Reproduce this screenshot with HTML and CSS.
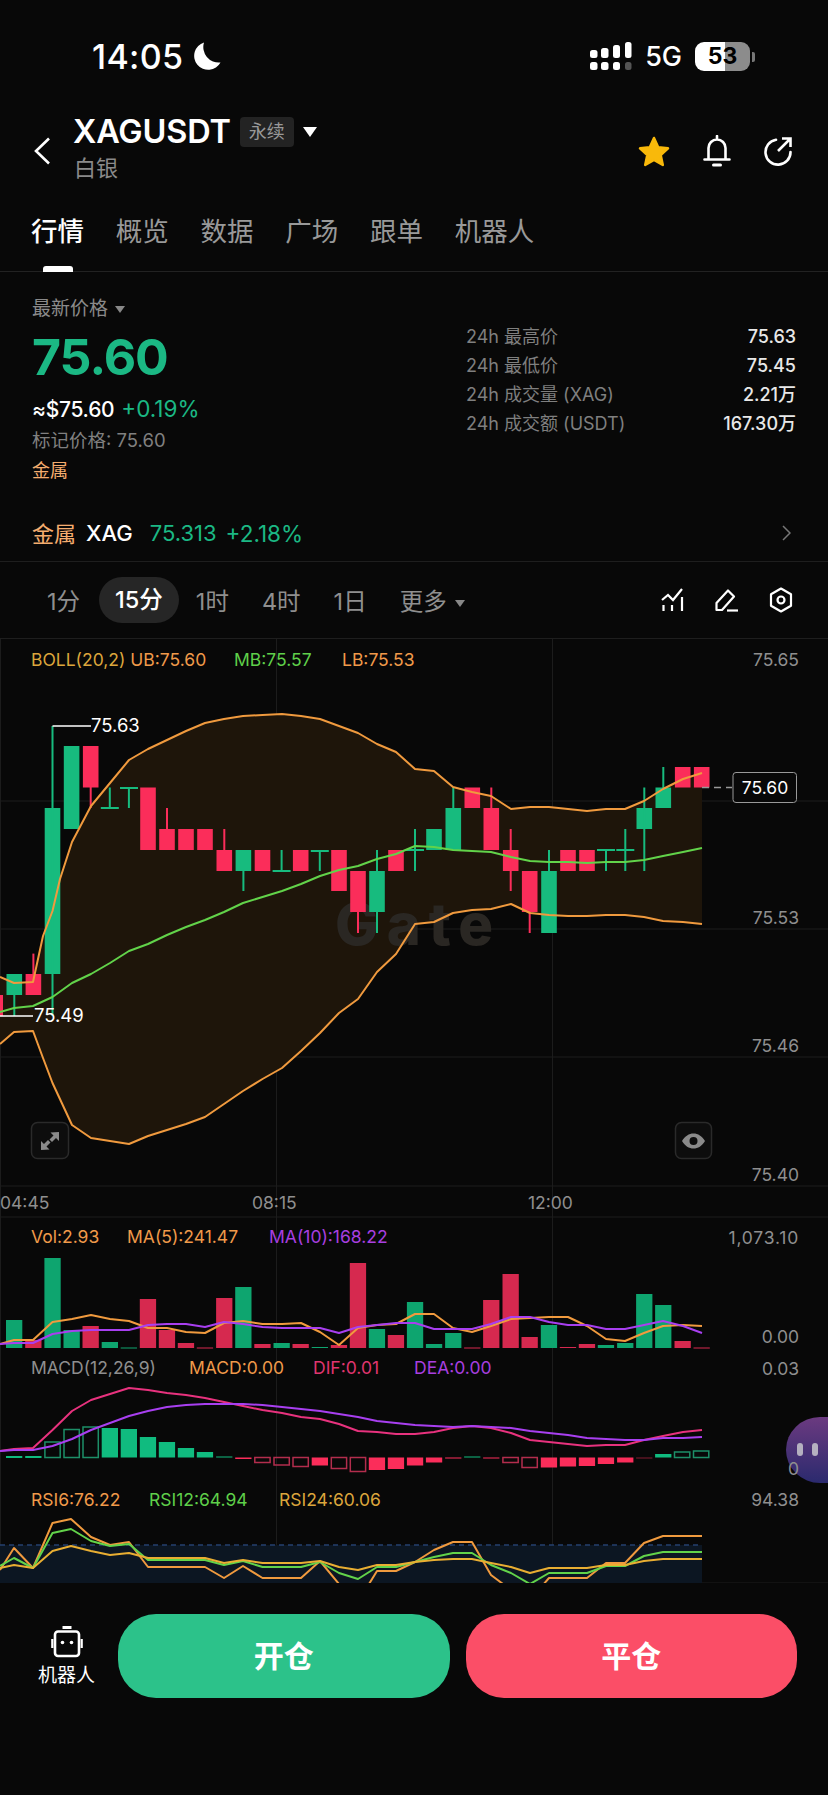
FILE: index.html
```html
<!DOCTYPE html>
<html lang="zh">
<head>
    <meta charset="UTF-8">
    <meta name="viewport" content="width=device-width, initial-scale=1.0">
    <title>XAGUSDT</title>
    <link rel="stylesheet" href="styles.css">
</head>
<body>
    <div class="status">
        <div class="status-left">
            <span class="clock">14:05</span>
            <svg class="moon" width="28" height="28" viewBox="0 0 28 28"><path d="M11 .5A14 14 0 1 0 27.5 20.500 15.500 15.500 0 0 1 11 .5z" fill="#fff"/></svg>
        </div>
        <div class="status-right">
            <svg width="42" height="28" viewBox="0 0 42 28" fill="#fff">
                <rect x="0" y="8" width="7.5" height="8" rx="2.5"/><rect x="11" y="6" width="7.5" height="10" rx="2.5"/><rect x="23" y="3" width="7" height="13" rx="2.5"/><rect x="35" y="0" width="6.5" height="16" rx="2.5"/>
                <rect x="0" y="20" width="7.5" height="8" rx="2.5"/><rect x="11" y="20" width="7.5" height="8" rx="2.5"/><rect x="23" y="20" width="7" height="8" rx="2.5"/><rect x="35" y="20" width="6.5" height="8" rx="2.5" fill="#555"/>
            </svg>
            <span class="network">5G</span>
            <div class="battery">53</div>
        </div>
    </div>

    <div class="nav">
        <svg class="back" width="16" height="28" viewBox="0 0 16 28"><path d="M15 1.5 2 14l13 12.5" fill="none" stroke="#fff" stroke-width="2.6"/></svg>
        <div class="title">
            <div class="title-top">
                <span class="symbol">XAGUSDT</span>
                <span class="tag">永续</span>
                <span class="caret"></span>
            </div>
            <div class="subtitle">白银</div>
        </div>
        <div class="nav-icons">
            <svg width="32" height="31" viewBox="0 0 32 31"><path d="M16 2l4.2 9.3 9.8 1-7.3 6.7 2.1 10L16 24l-8.800 5 2.100-10L2 12.300l9.800-1z" fill="#f9b90a" stroke="#f9b90a" stroke-width="2.500" stroke-linejoin="round"/></svg>
            <svg width="28" height="32" viewBox="0 0 28 32" fill="none" stroke="#fff" stroke-width="2.600"><path d="M14 1v3M5.500 24V13a8.500 8.500 0 0 1 17 0v11M1.500 24.500h25" stroke-linecap="round"/><path d="M10.500 30h7" stroke-width="3" stroke-linecap="round"/></svg>
            <svg width="28" height="30" viewBox="0 0 28 30" fill="none" stroke="#fff" stroke-width="2.600"><path d="M12 3.800A12.500 12.500 0 1 0 26.500 16" stroke-linecap="round"/><path d="M14 15 26 3M18 2.500h8.500V11"/></svg>
        </div>
    </div>

    <div class="tabs">
        <span class="tab active">行情</span>
        <span class="tab">概览</span>
        <span class="tab">数据</span>
        <span class="tab">广场</span>
        <span class="tab">跟单</span>
        <span class="tab">机器人</span>
    </div>

    <div class="quote">
        <div class="quote-left">
            <div class="price-label">最新价格 <span class="caret small"></span></div>
            <div class="price">75.60</div>
            <div class="price-sub"><span class="fiat">≈$75.60</span><span class="up">+0.19%</span></div>
            <div class="mark">标记价格: 75.60</div>
            <div class="sector">金属</div>
        </div>
        <div class="quote-right">
            <div class="stat"><span>24h 最高价</span><b>75.63</b></div>
            <div class="stat"><span>24h 最低价</span><b>75.45</b></div>
            <div class="stat"><span>24h 成交量 (XAG)</span><b>2.21万</b></div>
            <div class="stat"><span>24h 成交额 (USDT)</span><b>167.30万</b></div>
        </div>
    </div>

    <div class="index-row">
        <span class="index-sector">金属</span>
        <span class="index-name">XAG</span>
        <span class="index-price up">75.313</span>
        <span class="index-change up">+2.18%</span>
        <svg class="index-arrow" width="9" height="16" viewBox="0 0 9 16"><path d="M1 1l7 7-7 7" fill="none" stroke="#777" stroke-width="1.500"/></svg>
    </div>

    <div class="periods">
        <span class="period">1分</span>
        <span class="period active">15分</span>
        <span class="period">1时</span>
        <span class="period">4时</span>
        <span class="period">1日</span>
        <span class="period more">更多 <span class="caret small"></span></span>
        <div class="tools">
            <svg width="24" height="24" viewBox="0 0 24 24" fill="none" stroke="#fff" stroke-width="2.200"><path d="M1 12l6-5 5 5 9-11"/><path d="M2.500 17v6M11 17v6M21 9v14"/></svg>
            <svg width="24" height="24" viewBox="0 0 24 24" fill="none" stroke="#fff" stroke-width="2.200"><path d="M1.500 22V15L13 2.500l6 6L7 22z" stroke-linejoin="round"/><path d="M12 22.500h11"/></svg>
            <svg width="24" height="26" viewBox="0 0 24 26" fill="none" stroke="#fff" stroke-width="2.200"><path d="M12 1.500l10 5.800v11.400l-10 5.800-10-5.800V7.300z" stroke-linejoin="round"/><circle cx="12" cy="13" r="3.500"/></svg>
        </div>
    </div>

    <svg class="chart" width="828" height="944" viewBox="0 639 828 944">
        <defs>
            <clipPath id="rsiClip"><rect x="0" y="1500" width="828" height="83"/></clipPath>
            <linearGradient id="bubble" x1="0" y1="0" x2="0" y2="1"><stop offset="0" stop-color="#6b3a80"/><stop offset="1" stop-color="#2b2a6e"/></linearGradient>
        </defs>

        <g class="grid">
            <path d="M.5 639V1583M276.500 639V1583M552.500 639V1583"/>
            <path d="M0 801H828M0 929H828M0 1057H828M0 1186H828M0 1217H828M0 1583H828"/>
        </g>

        <polygon class="band" points="0,977 14,983 33,982 43,936 52.500,911 60,879 72,842 91,806 110,783 129,760 148,749 167,740 186,731 205,723 224,719 243,716 262.500,715 282,714 301,716 320,719 339,726 358,733 377,744 396,752 415,769 434,771 453,787 472,792 491,796 511,809 530,807 549,807 568,809 587,811 606,809 625,809 644,801 663,789 683,779 702,773 702,924 683,922 663,921 644,917 625,915 606,915 587,916 568,916 549,915 530,913 511,904 491,909 472,910 453,913 434,922 415,924 396,954 377,972 358,999 339,1013 320,1033 301,1051 282,1068 262.500,1079 243,1091 224,1104 205,1117 186,1124 167,1130 148,1136 129,1144 110,1141 91,1138 72,1125 52.500,1083 43,1058 33,1031 14,1032 0,1044"/>
        <text class="watermark" x="335" y="945">Gate</text>

        <g class="candle-up">
            <rect x="6.500" y="974" width="15.600" height="21"/><rect x="13.300" y="995" width="2" height="21"/>
            <rect x="44.700" y="808" width="15.600" height="166"/><rect x="51.500" y="726" width="2" height="290"/>
            <rect x="63.800" y="746" width="15.600" height="83"/>
            <rect x="100.800" y="807" width="18" height="2"/><rect x="108.800" y="787.500" width="2" height="20"/>
            <rect x="120" y="787" width="18" height="2"/><rect x="127.900" y="787" width="2" height="21"/>
            <rect x="235.600" y="850" width="15.600" height="21"/><rect x="242.400" y="871" width="2" height="20"/>
            <rect x="272.600" y="870" width="18" height="2"/><rect x="280.600" y="850" width="2" height="20"/>
            <rect x="310.800" y="850" width="18" height="2"/><rect x="318.800" y="850" width="2" height="21"/>
            <rect x="369.200" y="871" width="15.600" height="41"/><rect x="376" y="850" width="2" height="83"/>
            <rect x="406" y="849" width="18" height="2"/><rect x="414" y="829" width="2" height="42"/>
            <rect x="426.200" y="829" width="15.600" height="21"/>
            <rect x="445.500" y="808" width="15.600" height="42"/><rect x="452.300" y="787.500" width="2" height="21"/>
            <rect x="541.200" y="871" width="15.600" height="62"/><rect x="548" y="850" width="2" height="21"/>
            <rect x="597" y="849" width="18" height="2"/><rect x="605" y="849" width="2" height="22"/>
            <rect x="616.300" y="849" width="18" height="2"/><rect x="624.300" y="829" width="2" height="42"/>
            <rect x="636.500" y="808" width="15.600" height="21"/><rect x="643.300" y="787.500" width="2" height="83.500"/>
            <rect x="655.500" y="787.500" width="15.600" height="20.500"/><rect x="662.300" y="767" width="2" height="21"/>
        </g>
        <g class="candle-down">
            <rect x="-5" y="995" width="8" height="21"/>
            <rect x="25.600" y="974" width="15.600" height="21"/><rect x="32.400" y="953.600" width="2" height="21"/>
            <rect x="82.900" y="746" width="15.600" height="41.500"/><rect x="89.700" y="787" width="2" height="21"/>
            <rect x="140.200" y="787.500" width="15.600" height="62.500"/>
            <rect x="159.200" y="829" width="15.600" height="21"/><rect x="166" y="808" width="2" height="21"/>
            <rect x="178.200" y="829" width="15.600" height="21"/>
            <rect x="197.200" y="829" width="15.600" height="21"/>
            <rect x="216.500" y="850" width="15.600" height="21"/><rect x="223.300" y="829" width="2" height="21"/>
            <rect x="254.700" y="850" width="15.600" height="21"/>
            <rect x="292.900" y="850" width="15.600" height="21"/>
            <rect x="331.200" y="850" width="15.600" height="41"/>
            <rect x="350.200" y="871" width="15.600" height="41"/><rect x="357" y="912" width="2" height="21"/>
            <rect x="388.200" y="850" width="15.600" height="21"/>
            <rect x="464.500" y="787.500" width="15.600" height="20.500"/>
            <rect x="483.500" y="808" width="15.600" height="42"/><rect x="490.300" y="787.500" width="2" height="21"/>
            <rect x="502.900" y="850" width="15.600" height="21"/><rect x="509.700" y="829" width="2" height="62"/>
            <rect x="521.900" y="871" width="15.600" height="41"/><rect x="528.700" y="912" width="2" height="21"/>
            <rect x="560.200" y="850" width="15.600" height="21"/>
            <rect x="579.200" y="850" width="15.600" height="21"/>
            <rect x="674.900" y="767" width="15.600" height="20.500"/>
            <rect x="693.900" y="767" width="15.600" height="20.500"/>
        </g>

        <g class="line">
            <polyline class="orange" points="0,977 14,983 33,982 43,936 52.500,911 60,879 72,842 91,806 110,783 129,760 148,749 167,740 186,731 205,723 224,719 243,716 262.500,715 282,714 301,716 320,719 339,726 358,733 377,744 396,752 415,769 434,771 453,787 472,792 491,796 511,809 530,807 549,807 568,809 587,811 606,809 625,809 644,801 663,789 683,779 702,773"/>
            <polyline class="green" points="0,1012 14,1008 33,1006 52.500,997 72,983 91,974 110,963 129,951 148,944 167,935 186,927 205,920 224,912 243,903 262.500,897 282,891 301,884 320,876 339,870 358,866 377,859 396,854 415,846 434,847 453,850 472,851 491,852 511,857 530,861 549,862 568,862 587,863 606,862 625,862 644,860 663,856 683,852 702,848"/>
            <polyline class="orange" points="0,1044 14,1032 33,1031 43,1058 52.500,1083 72,1125 91,1138 110,1141 129,1144 148,1136 167,1130 186,1124 205,1117 224,1104 243,1091 262.500,1079 282,1068 301,1051 320,1033 339,1013 358,999 377,972 396,954 415,924 434,922 453,913 472,910 491,909 511,904 530,913 549,915 568,916 587,916 606,915 625,915 644,917 663,921 683,922 702,924"/>
        </g>

        <path class="callout" d="M52.500 726H91M0 1016H33"/>
        <text class="lbl white big" x="91" y="732">75.63</text>
        <text class="lbl white big" x="34" y="1022">75.49</text>

        <g class="lbl">
            <text class="yellow" x="31" y="666">BOLL(20,2) <tspan class="orange-text">UB:75.60</tspan></text>
            <text class="green-text" x="234" y="666">MB:75.57</text>
            <text class="orange-text" x="342" y="666">LB:75.53</text>
        </g>
        <g class="lbl axis">
            <text x="799" y="666">75.65</text>
            <text x="799" y="924">75.53</text>
            <text x="799" y="1052">75.46</text>
            <text x="799" y="1181">75.40</text>
            <text class="wide" x="799" y="1244">1,073.10</text>
            <text x="799" y="1343">0.00</text>
            <text x="799" y="1375">0.03</text>
            <text x="799" y="1506">94.38</text>
        </g>

        <path class="dash" d="M702 787.500H732"/>
        <rect class="tag-box" x="733" y="772.500" width="63.500" height="30" rx="3"/>
        <text class="lbl white" x="765" y="794" text-anchor="middle">75.60</text>

        <g class="chart-btn">
            <rect x="31.500" y="1122.500" width="37" height="36" rx="6"/>
            <rect x="675.500" y="1122.500" width="36" height="36" rx="6"/>
        </g>
        <path class="btn-icon" d="M59 1132v9l-3-3-4 4-2.500-2.500 4-4-3-3zM41 1150v-9l3 3 4-4 2.500 2.500-4 4 3 3z"/>
        <path class="btn-icon" fill-rule="evenodd" d="M682 1141c3-5 7-7.500 11.500-7.500s8.500 2.500 11.500 7.500c-3 5-7 7.500-11.500 7.500s-8.500-2.500-11.500-7.500zm11.500-4a4 4 0 1 0 0 8 4 4 0 0 0 0-8z"/>

        <g class="lbl time">
            <text x="0" y="1209">04:45</text>
            <text x="252" y="1209">08:15</text>
            <text x="528" y="1209">12:00</text>
        </g>

        <g class="lbl">
            <text class="orange-text" x="31" y="1243">Vol:2.93</text>
            <text class="orange-text" x="127" y="1243">MA(5):241.47</text>
            <text class="purple-text" x="269" y="1243">MA(10):168.22</text>
        </g>
        <g class="vol-up">
            <rect x="6" y="1320" width="16.300" height="28"/><rect x="44.400" y="1258" width="16.300" height="90"/><rect x="63.500" y="1330" width="16.300" height="18"/><rect x="101.700" y="1342" width="16.300" height="6"/><rect x="120.700" y="1347.500" width="16.300" height="1"/>
            <rect x="235.200" y="1287" width="16.300" height="61"/><rect x="273.500" y="1343" width="16.300" height="5"/><rect x="311.700" y="1347" width="16.300" height="1"/><rect x="368.800" y="1329" width="16.300" height="19"/><rect x="406.900" y="1302" width="16.300" height="46"/>
            <rect x="425.900" y="1344" width="16.300" height="4"/><rect x="445.100" y="1333" width="16.300" height="15"/><rect x="540.800" y="1325" width="16.300" height="23"/><rect x="597.800" y="1345" width="16.300" height="3"/><rect x="617.100" y="1343" width="16.300" height="5"/>
            <rect x="636.100" y="1294" width="16.300" height="54"/><rect x="655.100" y="1305" width="16.300" height="43"/>
        </g>
        <g class="vol-down">
            <rect x="25.200" y="1340" width="16.300" height="8"/><rect x="82.500" y="1326" width="16.300" height="22"/><rect x="139.800" y="1299" width="16.300" height="49"/><rect x="158.800" y="1330" width="16.300" height="18"/><rect x="177.800" y="1343" width="16.300" height="5"/>
            <rect x="196.800" y="1347.500" width="16.300" height="1"/><rect x="216.100" y="1298" width="16.300" height="50"/><rect x="254.300" y="1344" width="16.300" height="4"/><rect x="292.500" y="1344" width="16.300" height="4"/><rect x="330.800" y="1345" width="16.300" height="3"/>
            <rect x="349.800" y="1263" width="16.300" height="85"/><rect x="387.800" y="1335" width="16.300" height="13"/><rect x="464.100" y="1347.500" width="16.300" height="1"/><rect x="483.100" y="1300" width="16.300" height="48"/><rect x="502.500" y="1274" width="16.300" height="74"/>
            <rect x="521.500" y="1337" width="16.300" height="11"/><rect x="559.800" y="1347" width="16.300" height="1"/><rect x="578.800" y="1344" width="16.300" height="4"/><rect x="674.500" y="1341" width="16.300" height="7"/><rect x="693.500" y="1347.500" width="16.300" height="1"/>
        </g>
        <g class="line">
            <polyline class="orange" points="0,1344 14,1340 33,1340 52.500,1322 72,1319 91,1315 110,1319 129,1321 148,1328 167,1328 186,1332 205,1333 224,1323 243,1321 262.500,1324 282,1324 301,1323 320,1332 339,1345 358,1328 377,1325 396,1324 415,1314 434,1314 453,1328 472,1332 491,1326 511,1319 530,1318 549,1317 568,1317 587,1326 606,1339 625,1341 644,1333 663,1326 683,1325 702,1326"/>
            <polyline class="purple" points="0,1344 14,1343 33,1343 52.500,1334 72,1331 91,1330 110,1330 129,1330 148,1325 167,1324 186,1324 205,1327 224,1322 243,1324 262.500,1327 282,1328 301,1328 320,1328 339,1333 358,1327 377,1325 396,1323 415,1323 434,1329 453,1329 472,1329 491,1324 511,1317 530,1317 549,1322 568,1325 587,1325 606,1329 625,1329 644,1325 663,1321 683,1326 702,1333"/>
        </g>

        <g class="lbl">
            <text class="macd-name" x="31" y="1374">MACD(12,26,9)</text>
            <text class="orange-text" x="189" y="1374">MACD:0.00</text>
            <text class="pink-text" x="313" y="1374">DIF:0.01</text>
            <text class="purple-text" x="414" y="1374">DEA:0.00</text>
        </g>
        <g class="macd-up">
            <rect x="6" y="1456" width="16.300" height="2"/><rect x="25.200" y="1456" width="16.300" height="2"/><rect x="101.700" y="1428" width="16.300" height="29.500"/><rect x="120.700" y="1429" width="16.300" height="28.500"/><rect x="139.800" y="1437" width="16.300" height="20.500"/><rect x="158.800" y="1442" width="16.300" height="15.500"/><rect x="177.800" y="1448" width="16.300" height="9.500"/><rect x="196.800" y="1452" width="16.300" height="5.500"/><rect x="216.100" y="1456.500" width="16.300" height="1"/><rect x="464.100" y="1456.500" width="16.300" height="1"/><rect x="655.100" y="1454" width="16.300" height="3.500"/>
        </g>
        <g class="macd-down">
            <rect x="235.200" y="1457.500" width="16.300" height="1.500"/><rect x="311.700" y="1457.500" width="16.300" height="8"/><rect x="368.800" y="1457.500" width="16.300" height="12.500"/><rect x="387.800" y="1457.500" width="16.300" height="11.500"/><rect x="406.900" y="1457.500" width="16.300" height="8"/><rect x="425.900" y="1457.500" width="16.300" height="5"/><rect x="445.100" y="1457.500" width="16.300" height="1"/><rect x="483.100" y="1457.500" width="16.300" height="1"/><rect x="540.800" y="1457.500" width="16.300" height="10"/><rect x="559.800" y="1457.500" width="16.300" height="9"/><rect x="578.800" y="1457.500" width="16.300" height="8.500"/><rect x="597.800" y="1457.500" width="16.300" height="6.500"/><rect x="617.100" y="1457.500" width="16.300" height="5"/><rect x="636.100" y="1457.500" width="16.300" height="1" opacity=".5"/>
        </g>
        <g class="macd-hollow-up">
            <rect x="44.900" y="1442" width="15.300" height="15.500"/><rect x="64" y="1429.500" width="15.300" height="28"/><rect x="83" y="1427" width="15.300" height="30.500"/><rect x="674.500" y="1452" width="15.300" height="5.500"/><rect x="693.500" y="1451" width="15.300" height="6.500"/>
        </g>
        <g class="macd-hollow-down">
            <rect x="254.800" y="1457.500" width="15.300" height="5"/><rect x="274" y="1457.500" width="15.300" height="7.500"/><rect x="293" y="1457.500" width="15.300" height="9"/><rect x="331.300" y="1457.500" width="15.300" height="11"/><rect x="350.300" y="1457.500" width="15.300" height="14"/><rect x="502.900" y="1457.500" width="15.300" height="5"/><rect x="522" y="1457.500" width="15.300" height="10"/>
        </g>
        <g class="line">
            <polyline class="pink" points="0,1451 14,1449 33,1448 52.500,1430 72,1411 91,1400 110,1394 129,1388 148,1390 167,1393 186,1395 205,1398 224,1402 243,1406 262.500,1410 282,1413 301,1417 320,1419 339,1424 358,1431 377,1432 396,1434 415,1434 434,1432 453,1428 472,1426 491,1428 511,1433 530,1440 549,1442 568,1444 587,1446 606,1445 625,1445 644,1440 663,1436 683,1432 702,1430"/>
            <polyline class="purple" points="0,1451 14,1450 33,1450 52.500,1446 72,1439 91,1430 110,1423 129,1416 148,1411 167,1407 186,1405 205,1404 224,1404 243,1404 262.500,1405 282,1407 301,1409 320,1411 339,1414 358,1417 377,1421 396,1423 415,1425 434,1426 453,1427 472,1426 491,1427 511,1428 530,1431 549,1433 568,1435 587,1438 606,1439 625,1440 644,1440 663,1438 683,1438 702,1437"/>
        </g>

        <g class="lbl">
            <text class="orange-text" x="31" y="1506">RSI6:76.22</text>
            <text class="green-text" x="149" y="1506">RSI12:64.94</text>
            <text class="yellow" x="279" y="1506">RSI24:60.06</text>
        </g>
        <rect class="rsi-zone" x="0" y="1545" width="702" height="38"/>
        <path class="rsi-dash" d="M0 1545H702"/>
        <g class="line" clip-path="url(#rsiClip)">
            <polyline class="orange" points="0,1570 14,1548 33,1568 52.500,1523 71,1519 91,1537 110,1545 129,1542 148,1567 167,1567 186,1567 205,1567 224,1578 243,1566 262.500,1578 282,1578 301,1578 320,1561 339,1584 358,1593 369,1584 377,1571 396,1571 415,1562 434,1550 453,1542 472,1542 491,1575 511,1590 530,1600 549,1578 568,1578 587,1578 606,1563 625,1563 644,1543 663,1536 683,1536 702,1536"/>
            <polyline class="green" points="0,1566 14,1558 33,1568 52.500,1533 71,1529 91,1541 110,1546 129,1544 148,1560 167,1560 186,1560 205,1560 224,1565 243,1561 262.500,1567 282,1567 301,1567 320,1562 339,1573 358,1579 377,1567 396,1567 415,1562 434,1557 453,1553 472,1553 491,1565 511,1573 530,1584 549,1573 568,1573 587,1573 606,1566 625,1566 644,1556 663,1552 683,1552 702,1552"/>
            <polyline class="gold" points="0,1568 14,1565 33,1568 52.500,1551 71,1546 91,1551 110,1555 129,1553 148,1558 167,1558 186,1558 205,1558 224,1563 243,1560 262.500,1563 282,1563 301,1563 320,1561 339,1567 358,1570 377,1565 396,1565 415,1562 434,1560 453,1559 472,1559 491,1563 511,1567 530,1573 549,1568 568,1568 587,1568 606,1565 625,1565 644,1561 663,1559 683,1559 702,1559"/>
        </g>

        <path class="float-btn" d="M828 1417h-8a34 33 0 0 0-34 33 34 33 0 0 0 34 33h8z"/>
        <rect class="float-dot" x="797" y="1443" width="6" height="13" rx="3"/>
        <rect class="float-dot" x="812" y="1443" width="6" height="13" rx="3"/>
        <text class="lbl axis" x="799" y="1475">0</text>
    </svg>

    <div class="actions">
        <div class="bot">
            <svg width="32" height="32" viewBox="0 0 32 32" fill="none" stroke="#fff" stroke-width="2.600">
                <rect x="4" y="5.500" width="24" height="24.500" rx="3"/>
                <path d="M11.500 1.500h9" stroke-width="3"/>
                <path d="M1.300 13v9M30.700 13v9" stroke-width="2.200"/>
                <circle cx="11.500" cy="16.500" r="1.800" fill="#fff" stroke="none"/>
                <circle cx="20.500" cy="16.500" r="1.800" fill="#fff" stroke="none"/>
            </svg>
            <span>机器人</span>
        </div>
        <div class="trade open">开仓</div>
        <div class="trade close">平仓</div>
    </div>
</body>
</html>
```

FILE: styles.css
```css
body {
    font-family: Inter, "Noto Sans CJK SC", sans-serif;
    background-color: #080808;
    color: #fff;
    margin: 0;
    width: 828px;
    height: 1795px;
    overflow: hidden;
}
.status {
    display: flex;
    justify-content: space-between;
    align-items: center;
    height: 30px;
    padding: 41px 75px 0 92px;
}
.status-left {
    display: flex;
    align-items: center;
    gap: 10px;
}
.clock {
    font-size: 34px;
    font-weight: 500;
    letter-spacing: .3px;
}
.status-right {
    display: flex;
    align-items: center;
    gap: 13px;
}
.network {
    font-size: 27px;
    font-weight: 500;
}
.battery {
    position: relative;
    width: 55px;
    height: 29px;
    margin-right: 3px;
    border-radius: 9px;
    background: linear-gradient(to right, #fff 55%, #8c8c8c 55%);
    color: #000;
    font-size: 23px;
    font-weight: 700;
    line-height: 29px;
    text-align: center;
}
.battery::after {
    content: "";
    position: absolute;
    right: -5px;
    top: 10px;
    width: 3px;
    height: 10px;
    border-radius: 0 2px 2px 0;
    background: #777;
}
.nav {
    display: flex;
    align-items: center;
    height: 62px;
    margin-top: 45px;
    padding: 0 36px 0 34px;
}
.back {
    margin: 8px 24px 0 0;
}
.title {
    flex: 1;
    padding-top: 2px;
}
.title-top {
    display: flex;
    align-items: center;
}
.symbol {
    margin-left: -1px;
    font-size: 32.500px;
    font-weight: 600;
    line-height: 30px;
    letter-spacing: -.2px;
}
.tag {
    margin-left: 9px;
    padding: 0 9px;
    background: #232323;
    border-radius: 4px;
    color: #999;
    font-size: 18px;
    line-height: 30px;
}
.caret {
    display: inline-block;
    width: 0;
    height: 0;
    margin-left: 9px;
    border-left: 7px solid transparent;
    border-right: 7px solid transparent;
    border-top: 10px solid #fff;
}
.caret.small {
    margin-left: 2px;
    border-left-width: 5.500px;
    border-right-width: 5.500px;
    border-top: 7px solid #888;
    vertical-align: middle;
}
.subtitle {
    margin-top: 9px;
    color: #8a8a8a;
    font-size: 22px;
    line-height: 24px;
}
.nav-icons {
    display: flex;
    align-items: center;
    gap: 33px;
    margin-top: 8px;
}
.tabs {
    display: flex;
    gap: 31.750px;
    height: 53px;
    margin-top: 40px;
    padding-left: 31px;
    border-bottom: 1px solid #222;
}
.tab {
    position: relative;
    color: #999;
    font-size: 26.500px;
    line-height: 26px;
}
.tab.active {
    color: #fff;
    font-weight: 500;
}
.tab.active::after {
    content: "";
    position: absolute;
    left: 12px;
    top: 48px;
    width: 30px;
    height: 6px;
    border-radius: 3px 3px 0 0;
    background: #fff;
}
.quote {
    display: flex;
    justify-content: space-between;
    height: 233px;
    padding: 0 32px;
}
.price-label {
    margin-top: 26px;
    color: #8a8a8a;
    font-size: 19px;
    line-height: 22px;
}
.price {
    margin-top: 13px;
    color: #1bb884;
    font-size: 50px;
    font-weight: 700;
    line-height: 48px;
    letter-spacing: -1px;
}
.price-sub {
    display: flex;
    align-items: baseline;
    margin-top: 15px;
    line-height: 26px;
}
.fiat {
    margin-right: 7px;
    font-size: 21px;
    font-weight: 500;
    letter-spacing: -.3px;
}
.price-sub .up {
    font-size: 22.500px;
}
.up {
    color: #1bb884;
}
.mark {
    margin-top: 5px;
    color: #808080;
    font-size: 18.500px;
    line-height: 24px;
}
.sector {
    margin-top: 7px;
    color: #f5ad6f;
    font-size: 18px;
    line-height: 24px;
}
.quote-right {
    width: 330px;
    margin-top: 50px;
}
.stat {
    display: flex;
    justify-content: space-between;
    height: 29px;
    color: #7f7f7f;
    font-size: 18px;
    line-height: 29px;
}
.stat b {
    color: #e8e8e8;
    font-weight: 500;
}
.index-row {
    display: flex;
    align-items: center;
    height: 56px;
    padding: 0 37px 0 32px;
    border-bottom: 1px solid #1e1e1e;
    font-size: 22px;
}
.index-sector {
    margin-bottom: 3px;
    color: #f5ad6f;
}
.index-name {
    margin-left: 10px;
    font-weight: 500;
}
.index-price {
    margin-left: 17px;
}
.index-change {
    margin-left: 9px;
    flex: 1;
    font-size: 22.500px;
}
.periods {
    display: flex;
    align-items: center;
    height: 76px;
    padding: 0 35px 0 47px;
    border-bottom: 1px solid #1e1e1e;
    color: #8f8f8f;
    font-size: 23.500px;
}
.period {
    margin-right: 33px;
    white-space: nowrap;
}
.period.active {
    margin: 0 17px 0 -14px;
    padding: 0 16px;
    background: #262626;
    border-radius: 23px;
    color: #fff;
    font-weight: 500;
    line-height: 46px;
}
.tools {
    display: flex;
    align-items: center;
    gap: 30px;
    margin-left: auto;
}
.chart {
    display: block;
}
.grid path {
    fill: none;
    stroke: #1c1c1c;
    stroke-width: 1;
}
.band {
    fill: #1e150a;
}
.watermark {
    fill: #2a2723;
    font-size: 58px;
    font-weight: 800;
    letter-spacing: 8px;
}
.candle-up rect {
    fill: #17bb7e;
}
.candle-down rect {
    fill: #fb2d5a;
}
.line polyline {
    fill: none;
    stroke-width: 2;
    stroke-linejoin: round;
}
.orange {
    stroke: #f09a3e;
}
.green {
    stroke: #62d34a;
}
.purple {
    stroke: #a83ff0;
}
.pink {
    stroke: #e8327e;
}
.gold {
    stroke: #e9ae32;
}
.callout {
    fill: none;
    stroke: #fff;
    stroke-width: 1.500;
}
.lbl {
    font-size: 17.500px;
}
.lbl.big {
    font-size: 18.500px;
}
.white {
    fill: #fff;
}
.yellow {
    fill: #dca63c;
}
.orange-text {
    fill: #f09a4a;
}
.green-text {
    fill: #5fd04a;
}
.purple-text {
    fill: #a83fe0;
}
.pink-text {
    fill: #e0356f;
}
.macd-name {
    fill: #8f8f8f;
}
.axis text,
text.axis {
    fill: #8f8f8f;
    text-anchor: end;
}
.axis .wide {
    letter-spacing: .8px;
}
.time {
    fill: #8f8f8f;
}
.dash {
    fill: none;
    stroke: #999;
    stroke-width: 1.500;
    stroke-dasharray: 7 5;
}
.tag-box {
    fill: #080808;
    stroke: #999;
    stroke-width: 1;
}
.chart-btn rect {
    fill: #0d0d0d;
    stroke: #2a2a2a;
    stroke-width: 1.500;
}
.btn-icon {
    fill: #8a8a8a;
}
.vol-up rect {
    fill: #0ea56f;
}
.vol-down rect {
    fill: #d6294f;
}
.macd-up rect {
    fill: #10bb7f;
}
.macd-down rect {
    fill: #fb2d5a;
}
.macd-hollow-up rect {
    fill: none;
    stroke: #1d8f68;
    stroke-width: 1.500;
}
.macd-hollow-down rect {
    fill: none;
    stroke: #b32d4d;
    stroke-width: 1.500;
}
.rsi-zone {
    fill: #0c1622;
}
.rsi-dash {
    fill: none;
    stroke: #24406f;
    stroke-width: 1.500;
    stroke-dasharray: 5 4;
}
.float-btn {
    fill: url(#bubble);
}
.float-dot {
    fill: #b5b0c0;
}
.actions {
    display: flex;
    align-items: center;
    gap: 16px;
    margin-top: 31px;
    padding: 0 31px 0 38px;
}
.bot {
    display: flex;
    flex-direction: column;
    align-items: center;
    gap: 8px;
    width: 57px;
    margin-right: 7px;
    font-size: 19px;
    line-height: 20px;
}
.trade {
    flex: 1;
    height: 84px;
    border-radius: 38px;
    font-size: 30px;
    font-weight: 700;
    line-height: 84px;
    text-align: center;
}
.open {
    background: #2cc28a;
}
.close {
    background: #fb4e67;
}
```
